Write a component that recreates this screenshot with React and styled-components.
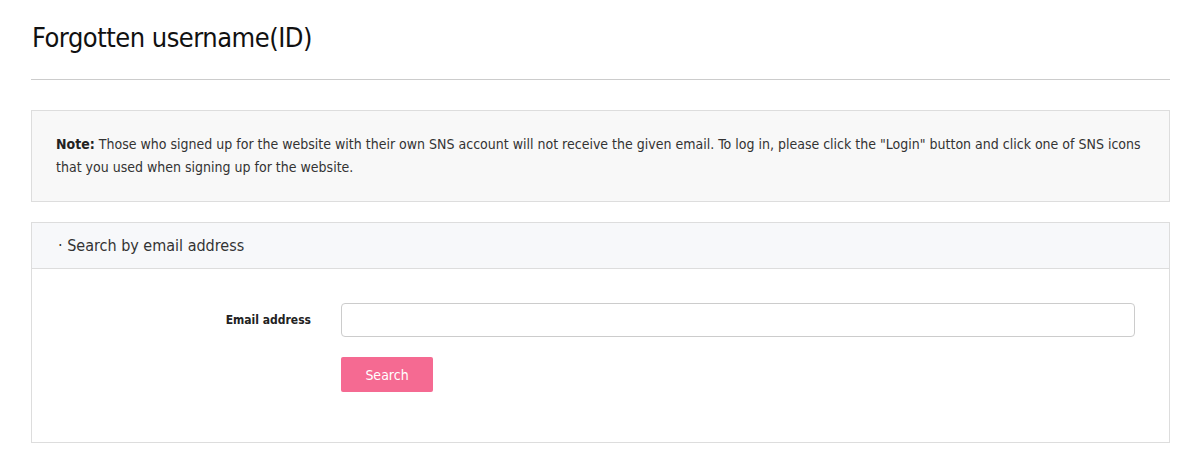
import React from 'react';
import styled, { createGlobalStyle } from 'styled-components';

const GlobalStyle = createGlobalStyle`
  body {
    margin: 0;
    background: #fff;
    font-family: "DejaVu Sans Condensed", "DejaVu Sans", sans-serif;
    color: #222;
  }
`;

const Page = styled.div`
  width: 1139px;
  padding: 0 0 29px 31px;
`;

const Title = styled.h2`
  margin: 0;
  padding: 18px 0 0 1px;
  height: 61px;
  font-size: 27px;
  font-weight: 400;
  letter-spacing: -0.5px;
  line-height: 40px;
  color: #111;
  border-bottom: 1px solid #ccc;
  box-sizing: content-box;
`;

const Note = styled.div`
  margin-top: 30px;
  padding: 22px 24px;
  background: #f8f8f8;
  border: 1px solid #ddd;
  font-size: 14px;
  line-height: 23px;
  color: #333;

  b {
    color: #222;
  }
`;

const Panel = styled.section`
  margin-top: 20px;
  border: 1px solid #ddd;
`;

const PanelHeader = styled.div`
  height: 45px;
  padding-left: 26px;
  display: flex;
  align-items: center;
  background: #f7f8fa;
  border-bottom: 1px solid #ddd;
  font-size: 16px;
  color: #333;
`;

const PanelBody = styled.div`
  padding: 34px 34px 50px 0;
  display: grid;
  grid-template-columns: 279px 1fr;
  column-gap: 30px;
  row-gap: 20px;
  align-items: center;
`;

const Label = styled.label`
  text-align: right;
  font-size: 12px;
  font-weight: 700;
  color: #222;
`;

const Input = styled.input`
  height: 34px;
  box-sizing: border-box;
  border: 1px solid #ccc;
  border-radius: 4px;
  padding: 0 10px;
  font: inherit;
  outline: none;
`;

const Button = styled.button`
  grid-column: 2;
  justify-self: start;
  width: 92px;
  height: 35px;
  border: none;
  border-radius: 2px;
  background: #f56a92;
  color: #fff;
  font-family: inherit;
  font-size: 14px;
  cursor: pointer;
`;

export default function App() {
  return (
    <Page>
      <GlobalStyle />
      <Title>Forgotten username(ID)</Title>
      <Note>
        <b>Note:</b> Those who signed up for the website with their own SNS account will not receive the given email. To log in, please click the "Login" button and click one of SNS icons that you used when signing up for the website.
      </Note>
      <Panel>
        <PanelHeader>· Search by email address</PanelHeader>
        <PanelBody>
          <Label htmlFor="email">Email address</Label>
          <Input id="email" type="text" />
          <Button type="button">Search</Button>
        </PanelBody>
      </Panel>
    </Page>
  );
}
